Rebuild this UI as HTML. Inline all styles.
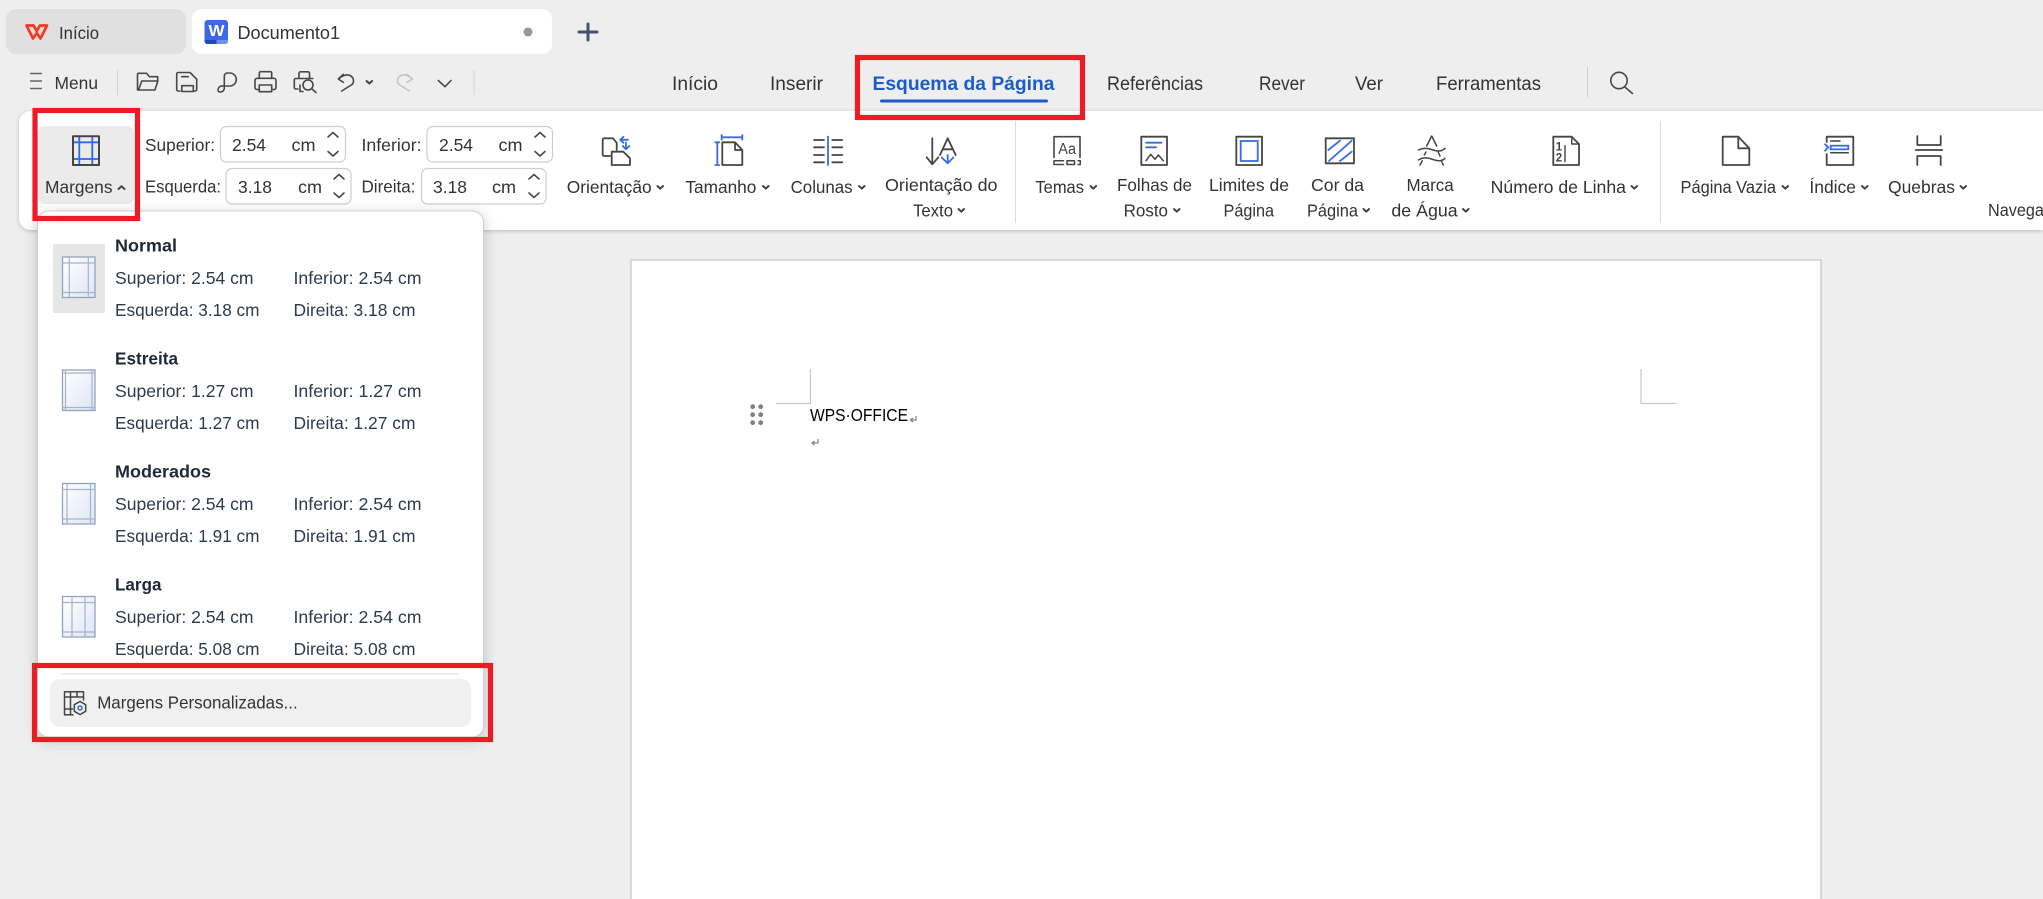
<!DOCTYPE html>
<html lang="pt"><head><meta charset="utf-8"><title>WPS Office</title>
<style>
html,body{margin:0;padding:0;background:#eeeeee;width:2043px;height:899px;overflow:hidden}
svg{display:block}
text{font-family:"Liberation Sans",Arial,sans-serif;font-size:17.5px;fill:#333}
.b{font-weight:700;fill:#1f2937}
.m{fill:#2f3a4a}
.i{fill:none;stroke:#454545;stroke-width:1.8;stroke-linejoin:round;stroke-linecap:round}
.bl{fill:none;stroke:#3a6be0;stroke-width:1.8;stroke-linecap:round;stroke-linejoin:round}
.c{fill:none;stroke:#444;stroke-width:2;stroke-linecap:round;stroke-linejoin:round}
.s{fill:none;stroke:#484848;stroke-width:1.6;stroke-linecap:round;stroke-linejoin:round}
.th{fill:none;stroke:#a6b3c8;stroke-width:1.2}
.r{fill:none;stroke:#ed1c24;stroke-width:5.2}
</style></head><body>
<svg width="2043" height="899" viewBox="0 0 2043 899" xmlns="http://www.w3.org/2000/svg">
<defs>
<linearGradient id="g" x1="0" y1="0" x2="1" y2="1"><stop offset="0" stop-color="#fff"/><stop offset="1" stop-color="#dde5f5"/></linearGradient>
<filter id="sh" x="-5%" y="-10%" width="110%" height="125%"><feDropShadow dx="0" dy="1" stdDeviation="2" flood-color="#000" flood-opacity=".22"/></filter>
<filter id="sh2" x="-15%" y="-10%" width="130%" height="120%"><feDropShadow dx="0" dy="3" stdDeviation="7" flood-color="#000" flood-opacity=".2"/></filter>
</defs>
<rect width="2043" height="899" fill="#eeeeee"/>

<!-- tabs -->
<rect x="6" y="9" width="180" height="45" rx="10" fill="#e0e0e0"/>
<path d="M26.500 25.500H33.500L36.800 31L40 25.500H47L40.500 38.500L36.800 33L33 38.500Z" fill="#fbd5cf" stroke="#f03a24" stroke-width="2.700" stroke-linejoin="round"/>
<text x="59" y="39" textLength="40" lengthAdjust="spacingAndGlyphs">Início</text>
<rect x="192" y="9" width="360" height="45" rx="10" fill="#fff"/>
<rect x="204.500" y="20" width="23.500" height="24" rx="3" fill="#3d67e6"/>
<path d="M204.500 40h23.500v1a3 3 0 0 1-3 3h-17.500a3 3 0 0 1-3-3z" fill="#6e90f0"/>
<path d="M204.500 40h12v4h-9a3 3 0 0 1-3-3z" fill="#1e46c8"/>
<text x="208.500" y="36" style="font-size:16px;font-weight:700;fill:#fff" textLength="16" lengthAdjust="spacingAndGlyphs">W</text>
<text x="237.500" y="39" style="font-size:18px" textLength="102.500" lengthAdjust="spacingAndGlyphs">Documento1</text>
<circle cx="528" cy="32" r="4.500" fill="#999"/>
<path d="M588 24v16M579 32h18" stroke="#46526c" stroke-width="3" stroke-linecap="round"/>

<!-- quick access -->
<path d="M30 73.500h12M30 81h12M30 88.500h12" stroke="#666" stroke-width="1.500"/>
<text x="54.500" y="89" textLength="43.500" lengthAdjust="spacingAndGlyphs">Menu</text>
<path d="M117.500 70v25M474 70v25" stroke="#d4d4d4" stroke-width="1"/>
<path class="s" d="M137.500 90V74.500a1.200 1.200 0 0 1 1.200-1.200h8l2.600 3.400h8.400V81M138.500 90l3.200-9h16.200l-3 9z"/>
<path class="s" d="M180 91h-1.800a1.500 1.500 0 0 1-1.500-1.500V74a1.500 1.500 0 0 1 1.500-1.500H190l6.700 6.700v10.300a1.500 1.500 0 0 1-1.500 1.500H194M181.800 91.500V85.700h11.500v5.800h-11.500zM181.800 76.700h6.500"/>
<path class="s" d="M224.300 85.500V76a3 3 0 0 1 3-3h2.500a6.500 6.500 0 0 1 0 13h-7a4.200 4.200 0 0 0-4.800 3.500 2 2 0 0 0 2 2.500 4 4 0 0 0 4.300-3.500v-2"/>
<path class="s" d="M259.300 77V73a1.300 1.300 0 0 1 1.300-1.300h9.800a1.300 1.300 0 0 1 1.300 1.300v4M258.500 89.500H257a2 2 0 0 1-2-2v-7.200a2 2 0 0 1 2-2h17a2 2 0 0 1 2 2v7.200a2 2 0 0 1-2 2h-1.500M259.300 85h12.400v6.700h-12.400z"/>
<path class="s" d="M299 78v-4.700a1.500 1.500 0 0 1 1.500-1.500h7.500a1.500 1.500 0 0 1 1.500 1.500V78M298 89h-2.200a1.500 1.500 0 0 1-1.500-1.500v-7.500a1.500 1.500 0 0 1 1.500-1.500h17M300 85v6.500h3"/><circle class="s" cx="308" cy="85" r="5"/><path class="s" d="M312 89l4 3.500"/>
<path class="s" d="M343.300 74.300L338.300 79l5 3.300M338.500 79c3.500-3.500 8.500-5 11.500-3.500 4 2 4.500 6.500 2 9L341.700 91"/>
<path class="c" d="M366.500 81l2.800 2.500 2.800-2.500"/>
<path d="M407 74.300l5.500 4.700-5.500 3.300M412.300 79c-3.300-3.500-8.300-5-11.300-3.500-4 2-4.500 6.500-2 9L409.500 91" fill="none" stroke="#c4c4c4" stroke-width="1.500" stroke-linecap="round" stroke-linejoin="round"/>
<path class="s" d="M438.300 80.500l6.700 6.200 6-6.200"/>

<!-- menu tabs -->
<text x="672" y="90" style="font-size:19px" textLength="46" lengthAdjust="spacingAndGlyphs">Início</text>
<text x="770" y="90" style="font-size:19px" textLength="53" lengthAdjust="spacingAndGlyphs">Inserir</text>
<text x="872.500" y="90" style="font-size:19px;font-weight:700;fill:#1d5bc9" textLength="182" lengthAdjust="spacingAndGlyphs">Esquema da Página</text>
<rect x="880" y="99.500" width="168" height="3" rx="1.500" fill="#1d5bc9"/>
<text x="1107" y="90" style="font-size:19px" textLength="96" lengthAdjust="spacingAndGlyphs">Referências</text>
<text x="1259" y="90" style="font-size:19px" textLength="46" lengthAdjust="spacingAndGlyphs">Rever</text>
<text x="1355" y="90" style="font-size:19px" textLength="28" lengthAdjust="spacingAndGlyphs">Ver</text>
<text x="1436" y="90" style="font-size:19px" textLength="105" lengthAdjust="spacingAndGlyphs">Ferramentas</text>
<path d="M1587.500 67v30" stroke="#cfcfcf"/>
<circle class="s" cx="1619" cy="80.500" r="8.200"/><path class="s" d="M1624.800 87l7.700 6.500"/>

<!-- ribbon -->
<path d="M2043 111H31a12 12 0 0 0-12 12v95a12 12 0 0 0 12 12h2012z" fill="#fff" filter="url(#sh)"/>
<rect x="37.500" y="126" width="96.500" height="78" rx="7" fill="#ebebeb"/>
<path d="M72.700 142.300h26.300M72.700 159h26.300M79.300 136v29M92.300 136v29" stroke="#2f66f0" stroke-width="1.800" fill="none"/>
<rect class="i" x="73" y="136.300" width="26" height="28.700" style="stroke-width:2"/>
<text x="45" y="193" textLength="67.500" lengthAdjust="spacingAndGlyphs">Margens</text>
<path class="c" d="M118.500 189l3-2.800 3 2.800"/>

<text x="145" y="151" textLength="70" lengthAdjust="spacingAndGlyphs">Superior:</text>
<text x="145" y="192.500" textLength="76" lengthAdjust="spacingAndGlyphs">Esquerda:</text>
<text x="361.500" y="151" textLength="60" lengthAdjust="spacingAndGlyphs">Inferior:</text>
<text x="361.500" y="192.500" textLength="54" lengthAdjust="spacingAndGlyphs">Direita:</text>
<g fill="#fff" stroke="#cdcdcd" stroke-width="1.200">
<rect x="220.500" y="126.500" width="125" height="35.500" rx="6"/>
<rect x="427" y="126.500" width="125.500" height="35.500" rx="6"/>
<rect x="226" y="168.500" width="125" height="35.500" rx="6"/>
<rect x="421.500" y="168.500" width="124.500" height="35.500" rx="6"/>
</g>
<g>
<text x="232" y="151" textLength="34" lengthAdjust="spacingAndGlyphs">2.54</text><text x="291.500" y="151" textLength="24" lengthAdjust="spacingAndGlyphs">cm</text>
<text x="439" y="151" textLength="34" lengthAdjust="spacingAndGlyphs">2.54</text><text x="498.500" y="151" textLength="24" lengthAdjust="spacingAndGlyphs">cm</text>
<text x="238" y="193" textLength="34" lengthAdjust="spacingAndGlyphs">3.18</text><text x="298" y="193" textLength="24" lengthAdjust="spacingAndGlyphs">cm</text>
<text x="433" y="193" textLength="34" lengthAdjust="spacingAndGlyphs">3.18</text><text x="492" y="193" textLength="24" lengthAdjust="spacingAndGlyphs">cm</text>
</g>
<g>
<path class="s" d="M328 137l5-4.500 5 4.500M328 151.500l5 4.500 5-4.500"/>
<path class="s" d="M535 137l5-4.500 5 4.500M535 151.500l5 4.500 5-4.500"/>
<path class="s" d="M334 179l5-4.500 5 4.500M334 193l5 4.500 5-4.500"/>
<path class="s" d="M529 179l5-4.500 5 4.500M529 193l5 4.500 5-4.500"/>
</g>

<!-- Orientacao -->
<path class="i" d="M610 156h-6a1.300 1.300 0 0 1-1.300-1.300V139.600a1.300 1.300 0 0 1 1.300-1.300h9l3.700 4.500V150"/>
<path class="i" d="M611.700 151.700h11.600l6.700 6.600v6.700h-18.300z"/>
<path class="bl" d="M628 139.800h-7.500M623.500 136.800l-3.300 3 3.300 3M626 142.500v6.500M622.700 146l3.300 3.300 3.300-3.300"/>
<text x="566.700" y="193" textLength="85" lengthAdjust="spacingAndGlyphs">Orientação</text><path class="c" d="M657.500 186l2.800 2.600 2.800-2.600"/>

<!-- Tamanho -->
<path class="bl" d="M721.700 137.300h20.600M721.700 135v4.600M742.300 135v4.600M717.300 142.300V165M715.300 142.300h4M715.300 165h4"/>
<path class="i" d="M722.300 142.300H735l7.300 7.700v15h-20zM735 142.300v7.700h7.300"/>
<text x="685.400" y="193" textLength="71" lengthAdjust="spacingAndGlyphs">Tamanho</text><path class="c" d="M763 186l2.800 2.600 2.800-2.600"/>

<!-- Colunas -->
<path class="i" d="M814 140h10M814 147.300h10M814 155h10M814 162.300h10M832.300 140h10M832.300 147.300h10M832.300 155h10M832.300 162.300h10"/>
<path class="bl" d="M828 136.700V165"/>
<text x="790.600" y="193" textLength="62" lengthAdjust="spacingAndGlyphs">Colunas</text><path class="c" d="M859 186l2.800 2.600 2.800-2.600"/>

<!-- Orientacao do texto -->
<path class="i" d="M932.300 138.300v26M926.700 157.300l5.600 7 6-7M940 155l7.700-16.700 8 16.700M943 149.300h9.500"/>
<path class="bl" d="M947.700 155v8.300M941.700 157.500l6 5.800 5.600-5.800"/>
<text x="885" y="191" textLength="112.500" lengthAdjust="spacingAndGlyphs">Orientação do</text>
<text x="913" y="216.500" textLength="40" lengthAdjust="spacingAndGlyphs">Texto</text><path class="c" d="M958.500 209l2.800 2.600 2.800-2.600"/>
<path d="M1015.500 121v102" stroke="#dcdcdc"/>

<!-- Temas -->
<path class="i" d="M1054 157.500V136.700h26v20.800" style="stroke-width:1.600"/>
<path class="i" style="stroke-width:1.500" d="M1063.500 160.800H1054v3.700h9.500M1067 160.800h7.500v3.700H1067zM1078 160.800h2.300v3.700H1078"/>
<text x="1058.300" y="154" style="font-size:15.500px;fill:#444" textLength="17.700" lengthAdjust="spacingAndGlyphs">Aa</text>
<text x="1035.400" y="193" textLength="48.600" lengthAdjust="spacingAndGlyphs">Temas</text><path class="c" d="M1090.500 186l2.800 2.600 2.800-2.600"/>

<!-- Folhas de Rosto -->
<rect class="i" x="1141.300" y="136.700" width="25.700" height="28.300"/>
<path class="bl" d="M1146 142.700h15.500M1146 147.300h10"/>
<path class="i" style="stroke-width:1.500" d="M1146 160.700l4.700-6.400 4.300 5 3.300-4.300 5 5.700"/>
<text x="1117" y="191" textLength="75" lengthAdjust="spacingAndGlyphs">Folhas de</text>
<text x="1123.600" y="216.500" textLength="44.400" lengthAdjust="spacingAndGlyphs">Rosto</text><path class="c" d="M1174 209l2.800 2.600 2.800-2.600"/>

<!-- Limites -->
<rect class="i" x="1236.300" y="136.700" width="25.700" height="28.300"/>
<rect class="bl" x="1240.700" y="141" width="17" height="20" style="stroke-linejoin:miter"/>
<text x="1209" y="191" textLength="80" lengthAdjust="spacingAndGlyphs">Limites de</text>
<text x="1223.500" y="216.500" textLength="50.500" lengthAdjust="spacingAndGlyphs">Página</text>

<!-- Cor -->
<rect class="i" x="1325.700" y="138.300" width="28.300" height="25"/>
<path class="bl" d="M1328.300 150l11.700-9.300M1329 161l22.700-20.300M1340 161l11.700-9.300"/>
<text x="1311" y="191" textLength="53" lengthAdjust="spacingAndGlyphs">Cor da</text>
<text x="1307" y="216.500" textLength="51" lengthAdjust="spacingAndGlyphs">Página</text><path class="c" d="M1363.500 209l2.800 2.600 2.800-2.600"/>

<!-- Marca -->
<path class="i" style="stroke-width:1.500" d="M1426.700 146l5-10 5 10M1426 152l-1.700 3M1438.300 152.300l1.700 3.700M1422.300 160.700l-2.300 4.300M1441.700 161.700l1.600 3.300M1418.500 150c4-2.200 8-2.200 13-.5s9.500 2.700 13.500-1.200M1418.500 160c4-2.700 8-2.700 13-1s9.500 3.200 13.500-.7"/>
<text x="1406.500" y="191" textLength="47.200" lengthAdjust="spacingAndGlyphs">Marca</text>
<text x="1391.400" y="216.500" textLength="66.200" lengthAdjust="spacingAndGlyphs">de Água</text><path class="c" d="M1463 209l2.800 2.600 2.800-2.600"/>

<!-- Numero -->
<path class="i" d="M1553.300 136.700h18.400l7.300 7.300v21h-25.700z"/>
<path class="i" style="stroke-width:1.400" d="M1565 145.700v16M1571.700 136.700v7.300h7.300"/>
<text x="1555.800" y="150.500" style="font-size:11.500px;font-weight:700;fill:#444">1</text>
<text x="1555.800" y="161.500" style="font-size:11.500px;font-weight:700;fill:#444">2</text>
<text x="1490.700" y="193" textLength="135.300" lengthAdjust="spacingAndGlyphs">Número de Linha</text><path class="c" d="M1631.500 186l2.800 2.600 2.800-2.600"/>
<path d="M1660.500 121v102" stroke="#dcdcdc"/>

<!-- Pagina Vazia -->
<path class="i" d="M1722.700 136.700h15.600l11 11.600V165h-26.600zM1738.300 136.700v11.600h11"/>
<text x="1680.500" y="193" textLength="95.500" lengthAdjust="spacingAndGlyphs">Página Vazia</text><path class="c" d="M1782.500 186l2.800 2.600 2.800-2.600"/>

<!-- Indice -->
<path class="i" d="M1826.700 142v-5.300h26.600V165h-26.600v-11"/>
<path class="i" style="stroke-width:1.500" d="M1830.700 141h9.300M1830.700 152.700h17.600"/>
<rect class="bl" x="1830.700" y="145.700" width="17.600" height="3.600" style="stroke-linejoin:miter"/>
<path class="bl" d="M1825 144.300l3.300 3-3.300 3.400"/>
<text x="1809.400" y="193" textLength="46.600" lengthAdjust="spacingAndGlyphs">Índice</text><path class="c" d="M1862 186l2.800 2.600 2.800-2.600"/>

<!-- Quebras -->
<path class="i" d="M1917.300 136v9h23.400v-9M1915.700 150h26.600M1917.300 165v-9h23.400v9"/>
<text x="1888" y="193" textLength="67" lengthAdjust="spacingAndGlyphs">Quebras</text><path class="c" d="M1960.500 186l2.800 2.600 2.800-2.600"/>

<text x="1988" y="216" textLength="82" lengthAdjust="spacingAndGlyphs">Navegação</text>

<!-- document page -->
<rect x="631" y="260" width="1190" height="660" fill="#fff" stroke="#cfcfcf" stroke-width="1.500"/>
<path d="M810.500 369v34.500H776M1641 369v34.500h35" fill="none" stroke="#c8c8c8" stroke-width="1.200"/>
<g fill="#808080"><circle cx="752.700" cy="406.700" r="2.400"/><circle cx="760.700" cy="406.700" r="2.400"/><circle cx="752.700" cy="414.700" r="2.400"/><circle cx="760.700" cy="414.700" r="2.400"/><circle cx="752.700" cy="422.700" r="2.400"/><circle cx="760.700" cy="422.700" r="2.400"/></g>
<text x="810" y="421" style="font-size:17.500px;fill:#000" textLength="98" lengthAdjust="spacingAndGlyphs">WPS·OFFICE</text>
<path d="M916 416v4h-5M913 418l-2.500 2 2.500 2M818 439v4h-6M814.500 441l-2.500 2 2.500 2" fill="none" stroke="#808080" stroke-width="1.200"/>

<!-- dropdown -->
<rect x="37.500" y="211" width="446" height="526" rx="11" fill="#fff" stroke="#cfcfcf" filter="url(#sh2)"/>
<rect x="53" y="244" width="52" height="69" rx="2" fill="#e6e6e6"/>

<g>
<rect x="62.500" y="257" width="32.500" height="40.500" fill="url(#g)" stroke="#94a3bb" stroke-width="1.300"/>
<path class="th" d="M69.300 257v40.500M88.300 257v40.500M62.500 263h32.500M62.500 292.500h32.500"/>
<rect x="62.500" y="370" width="32.500" height="40.500" fill="url(#g)" stroke="#94a3bb" stroke-width="1.300"/>
<path class="th" d="M65.500 370v40.500M92 370v40.500M62.500 373h32.500M62.500 407.500h32.500"/>
<rect x="62.500" y="483.500" width="32.500" height="40.500" fill="url(#g)" stroke="#94a3bb" stroke-width="1.300"/>
<path class="th" d="M67 483.500v40.500M90.500 483.500v40.500M62.500 489.500h32.500M62.500 519h32.500"/>
<rect x="62.500" y="596.500" width="32.500" height="40.500" fill="url(#g)" stroke="#94a3bb" stroke-width="1.300"/>
<path class="th" d="M72 596.500v40.500M85 596.500v40.500M62.500 602.500h32.500M62.500 632h32.500"/>
</g>

<text class="b" x="115" y="251.500" textLength="62" lengthAdjust="spacingAndGlyphs">Normal</text>
<text class="m" x="115" y="284" textLength="138.500" lengthAdjust="spacingAndGlyphs">Superior: 2.54 cm</text>
<text class="m" x="293.500" y="284" textLength="128" lengthAdjust="spacingAndGlyphs">Inferior: 2.54 cm</text>
<text class="m" x="115" y="316" textLength="144.500" lengthAdjust="spacingAndGlyphs">Esquerda: 3.18 cm</text>
<text class="m" x="293.500" y="316" textLength="122" lengthAdjust="spacingAndGlyphs">Direita: 3.18 cm</text>

<text class="b" x="115" y="364.500" textLength="63" lengthAdjust="spacingAndGlyphs">Estreita</text>
<text class="m" x="115" y="397" textLength="138.500" lengthAdjust="spacingAndGlyphs">Superior: 1.27 cm</text>
<text class="m" x="293.500" y="397" textLength="128" lengthAdjust="spacingAndGlyphs">Inferior: 1.27 cm</text>
<text class="m" x="115" y="429" textLength="144.500" lengthAdjust="spacingAndGlyphs">Esquerda: 1.27 cm</text>
<text class="m" x="293.500" y="429" textLength="122" lengthAdjust="spacingAndGlyphs">Direita: 1.27 cm</text>

<text class="b" x="115" y="477.500" textLength="96" lengthAdjust="spacingAndGlyphs">Moderados</text>
<text class="m" x="115" y="510" textLength="138.500" lengthAdjust="spacingAndGlyphs">Superior: 2.54 cm</text>
<text class="m" x="293.500" y="510" textLength="128" lengthAdjust="spacingAndGlyphs">Inferior: 2.54 cm</text>
<text class="m" x="115" y="542" textLength="144.500" lengthAdjust="spacingAndGlyphs">Esquerda: 1.91 cm</text>
<text class="m" x="293.500" y="542" textLength="122" lengthAdjust="spacingAndGlyphs">Direita: 1.91 cm</text>

<text class="b" x="115" y="590.500" textLength="46.500" lengthAdjust="spacingAndGlyphs">Larga</text>
<text class="m" x="115" y="623" textLength="138.500" lengthAdjust="spacingAndGlyphs">Superior: 2.54 cm</text>
<text class="m" x="293.500" y="623" textLength="128" lengthAdjust="spacingAndGlyphs">Inferior: 2.54 cm</text>
<text class="m" x="115" y="655" textLength="144.500" lengthAdjust="spacingAndGlyphs">Esquerda: 5.08 cm</text>
<text class="m" x="293.500" y="655" textLength="122" lengthAdjust="spacingAndGlyphs">Direita: 5.08 cm</text>

<path d="M62 674h397" stroke="#e2e2e2" stroke-width="1.200"/>
<rect x="50" y="679" width="421" height="48" rx="10" fill="#f0f0f0"/>
<path class="i" style="stroke-width:1.500" d="M83.500 700v-8.300H64.500v23h8.500M64.500 697h19M70.500 691.700v23M64.500 709h8M77 691.700v5.300"/>
<path class="i" style="stroke-width:1.500" d="M80 701.500l5.700 3.200v6.600l-5.700 3.200-5.700-3.200v-6.600z"/>
<circle cx="80" cy="708" r="2" fill="none" stroke="#3a6be0" stroke-width="1.500"/>
<text x="97.200" y="708.500" textLength="200.500" lengthAdjust="spacingAndGlyphs">Margens Personalizadas...</text>

<!-- red highlights -->
<rect class="r" x="35" y="110.500" width="102.500" height="108"/>
<rect class="r" x="857.500" y="57.500" width="225" height="60"/>
<rect class="r" x="34.500" y="665.500" width="456" height="74"/>
</svg>
</body></html>
